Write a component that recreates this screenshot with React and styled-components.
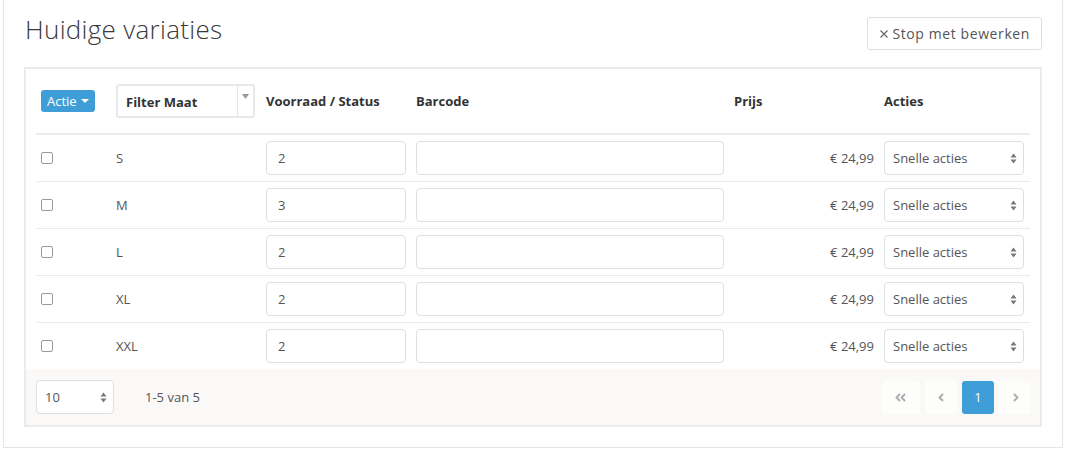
import styled, { createGlobalStyle } from "styled-components";

const GlobalStyle = createGlobalStyle`
  html, body {
    margin: 0;
    padding: 0;
    background: #ffffff;
    font-family: "Open Sans", "Liberation Sans", sans-serif;
    color: #444;
  }
`;

const Panel = styled.div`
  margin-left: 3px;
  width: 1060px;
  box-sizing: border-box;
  border: 1px solid #e3e6e8;
  border-top: none;
  padding: 17px 20px 20px 20px;
`;

const HeaderBar = styled.div`
  display: flex;
  justify-content: space-between;
  align-items: flex-start;
  height: 33px;
  margin-bottom: 17px;
`;

const Title = styled.h2`
  margin: -3px 0 0 1px;
  font-size: 26px;
  font-weight: 300;
  color: #3a3a3a;
  line-height: 30px;
  letter-spacing: 0.3px;
`;

const StopButton = styled.button`
  height: 33px;
  padding: 0 11px;
  background: #fff;
  border: 1px solid #dcdfe2;
  border-radius: 3px;
  font-family: inherit;
  font-size: 14px;
  letter-spacing: 0.6px;
  color: #555;
  display: flex;
  align-items: center;
  gap: 3px;
`;

const Box = styled.div`
  border: 2px solid #e9ecee;
  box-sizing: border-box;
`;

const TableArea = styled.div`
  padding: 12px 10px 0 10px;
`;

const Row = styled.div`
  display: grid;
  grid-template-columns: 75px 150px 150px 318px 150px 150px;
  align-items: center;
  box-sizing: content-box;
  height: ${(p) => (p.$head ? "40px" : "46px")};
  padding-bottom: ${(p) => (p.$head ? "12px" : "0")};
  border-bottom: ${(p) => (p.$head ? "2px solid #e9ecee" : p.$last ? "none" : "1px solid #e9ecee")};
`;

const Cell = styled.div`
  padding: 0 5px;
  text-align: ${(p) => (p.$right ? "right" : "left")};
  font-size: 13px;
  font-weight: ${(p) => (p.$bold ? 700 : 400)};
  color: ${(p) => (p.$bold ? "#333" : "#555")};
  display: flex;
  justify-content: ${(p) => (p.$right ? "flex-end" : "flex-start")};
  align-items: center;
`;

const ActieButton = styled.button`
  height: 22px;
  width: 54px;
  padding: 0 6px;
  background: #3f9dd8;
  color: #fff;
  border: none;
  border-radius: 3px;
  font-family: inherit;
  font-size: 13px;
  display: flex;
  align-items: center;
  gap: 4px;
`;

const Caret = styled.span`
  width: 0;
  height: 0;
  border-left: 4px solid transparent;
  border-right: 4px solid transparent;
  border-top: 4px solid #fff;
`;

const FilterSelect = styled.div`
  width: 139px;
  height: 34px;
  box-sizing: border-box;
  border: 2px solid #e6e8ea;
  border-radius: 3px;
  display: flex;
  align-items: stretch;
  background: #fff;
`;

const FilterLabel = styled.span`
  flex: 1;
  display: flex;
  align-items: center;
  padding-left: 8px;
  padding-top: 2px;
  font-weight: 700;
  font-size: 13px;
  color: #333;
`;

const FilterArrow = styled.span`
  width: 16px;
  border-left: 1px solid #e3e5e7;
  display: flex;
  justify-content: center;
  padding-top: 8px;
  box-sizing: border-box;
`;

const TextInput = styled.div`
  width: ${(p) => p.$w}px;
  height: 34px;
  box-sizing: border-box;
  border: 1px solid #dcdfe3;
  border-radius: 4px;
  padding: 0 11px;
  display: flex;
  align-items: center;
  font-size: 13px;
  color: #555;
  background: #fff;
`;

const SelectBox = styled.div`
  width: ${(p) => p.$w}px;
  height: 34px;
  box-sizing: border-box;
  border: 1px solid #dcdfe3;
  border-radius: 4px;
  padding: 0 6px 0 8px;
  display: flex;
  align-items: center;
  justify-content: space-between;
  font-size: 13px;
  color: #555;
  background: #fff;
`;

const Check = styled.span`
  width: 10px;
  height: 10px;
  border: 1px solid #9a9a9a;
  border-radius: 2px;
  background: #fff;
`;

const Footer = styled.div`
  background: #faf9f8;
  display: flex;
  align-items: center;
  justify-content: space-between;
  padding: 11px 9px 11px 10px;
`;

const FooterLeft = styled.div`
  display: flex;
  align-items: center;
  gap: 31px;
  font-size: 13px;
  color: #555;
`;

const Pager = styled.div`
  display: flex;
  gap: 5px;
`;

const PageBtn = styled.span`
  width: ${(p) => p.$w || 32}px;
  height: 33px;
  border-radius: 3px;
  display: flex;
  align-items: center;
  justify-content: center;
  background: ${(p) => (p.$active ? "#3f9dd8" : "#fdfdfc")};
  color: ${(p) => (p.$active ? "#fff" : "#aaa")};
  font-size: 13px;
`;

const UpDown = () => (
  <svg width="7" height="11" viewBox="0 0 7 11">
    <path d="M3.5 0.5 L6.5 4.5 L0.5 4.5 Z" fill="#777" />
    <path d="M3.5 10.5 L6.5 6.5 L0.5 6.5 Z" fill="#777" />
  </svg>
);

const sizes = [
  { size: "S", stock: "2" },
  { size: "M", stock: "3" },
  { size: "L", stock: "2" },
  { size: "XL", stock: "2" },
  { size: "XXL", stock: "2" },
];

export default function App() {
  return (
    <>
      <GlobalStyle />
      <Panel>
        <HeaderBar>
          <Title>Huidige variaties</Title>
          <StopButton>
            <svg width="10" height="10" viewBox="0 0 10 10">
              <path d="M1.5 1.5 L8.5 8.5 M8.5 1.5 L1.5 8.5" stroke="#666" strokeWidth="1.2" />
            </svg>
            Stop met bewerken
          </StopButton>
        </HeaderBar>
        <Box>
          <TableArea>
            <Row $head>
              <Cell>
                <ActieButton>
                  Actie <Caret />
                </ActieButton>
              </Cell>
              <Cell>
                <FilterSelect>
                  <FilterLabel>Filter Maat</FilterLabel>
                  <FilterArrow>
                    <svg width="7" height="5" viewBox="0 0 7 5">
                      <path d="M0 0 L7 0 L3.5 5 Z" fill="#999" />
                    </svg>
                  </FilterArrow>
                </FilterSelect>
              </Cell>
              <Cell $bold>Voorraad / Status</Cell>
              <Cell $bold>Barcode</Cell>
              <Cell $bold>Prijs</Cell>
              <Cell $bold>Acties</Cell>
            </Row>
            {sizes.map((s, i) => (
              <Row key={s.size} $last={i === sizes.length - 1}>
                <Cell>
                  <Check />
                </Cell>
                <Cell>{s.size}</Cell>
                <Cell>
                  <TextInput $w={140}>{s.stock}</TextInput>
                </Cell>
                <Cell>
                  <TextInput $w={308} />
                </Cell>
                <Cell $right>€ 24,99</Cell>
                <Cell>
                  <SelectBox $w={140}>
                    Snelle acties
                    <UpDown />
                  </SelectBox>
                </Cell>
              </Row>
            ))}
          </TableArea>
          <Footer>
            <FooterLeft>
              <SelectBox $w={78}>
                10
                <UpDown />
              </SelectBox>
              1-5 van 5
            </FooterLeft>
            <Pager>
              <PageBtn $w={38}>
                <svg width="12" height="9" viewBox="0 0 12 9">
                  <path d="M5 1 L1.5 4.5 L5 8 M10 1 L6.5 4.5 L10 8" stroke="#aaa" strokeWidth="1.8" fill="none" />
                </svg>
              </PageBtn>
              <PageBtn>
                <svg width="7" height="9" viewBox="0 0 7 9">
                  <path d="M5 1 L1.5 4.5 L5 8" stroke="#aaa" strokeWidth="1.8" fill="none" />
                </svg>
              </PageBtn>
              <PageBtn $active>1</PageBtn>
              <PageBtn>
                <svg width="7" height="9" viewBox="0 0 7 9">
                  <path d="M2 1 L5.5 4.5 L2 8" stroke="#aaa" strokeWidth="1.8" fill="none" />
                </svg>
              </PageBtn>
            </Pager>
          </Footer>
        </Box>
      </Panel>
    </>
  );
}
